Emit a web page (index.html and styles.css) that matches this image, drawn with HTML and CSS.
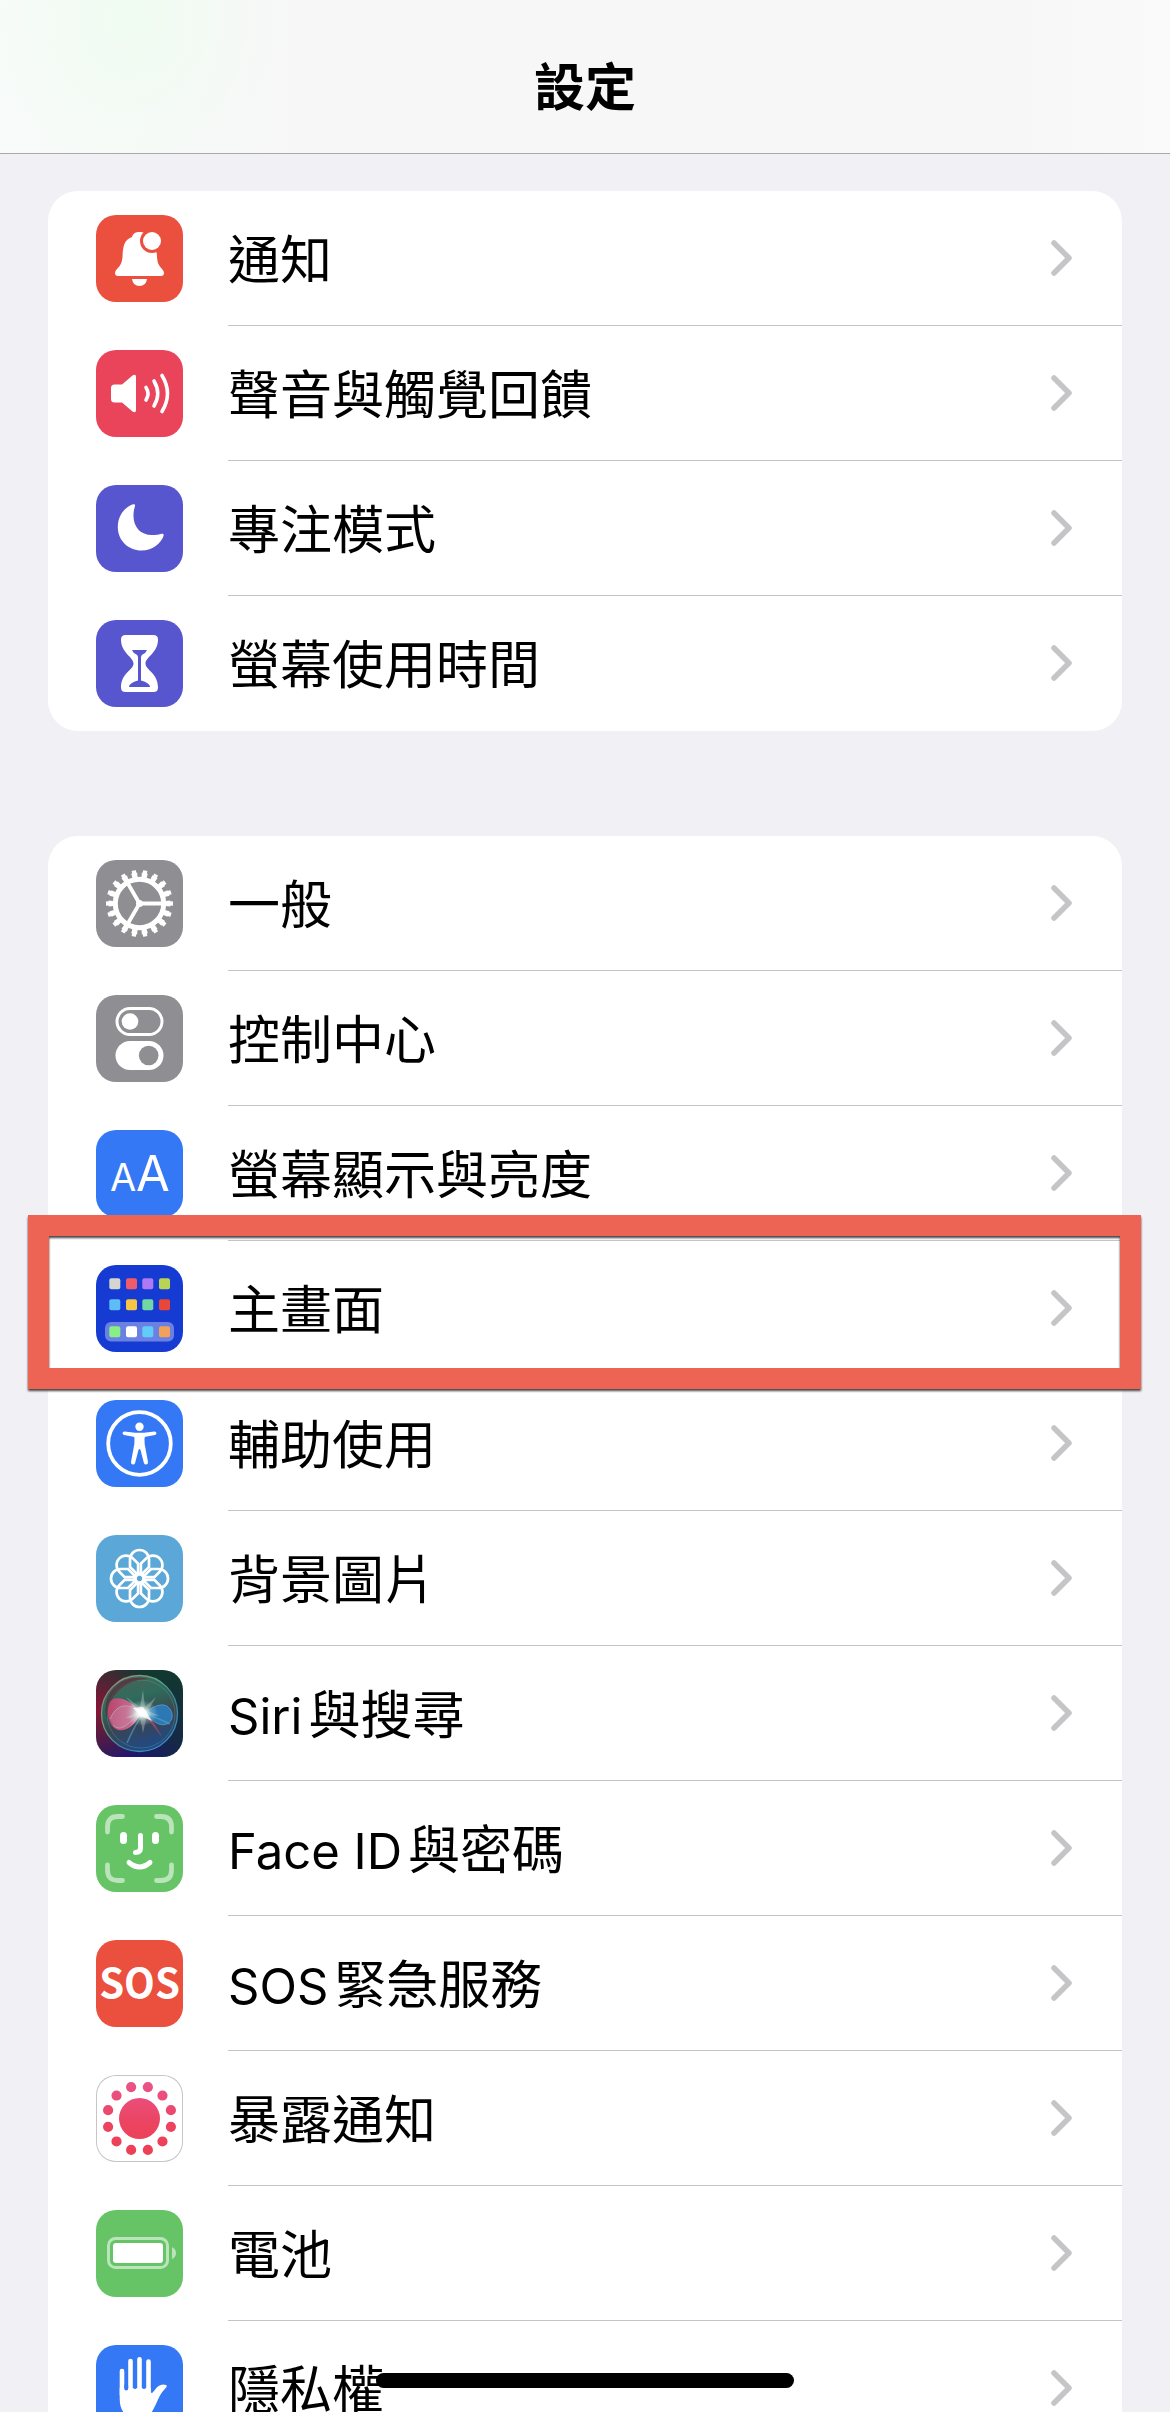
FILE: index.html
```html
<!DOCTYPE html>
<html lang="zh-Hant">
<head>
<meta charset="utf-8">
<meta name="viewport" content="width=device-width, initial-scale=1">
<title>設定</title>
<link rel="stylesheet" href="styles.css">
</head>
<body>
<svg class="defs" aria-hidden="true">
  <symbol id="chevron" viewBox="0 0 21 36"><path d="M3 3 18 18 3 33" fill="none" stroke="#c5c5c7" stroke-width="5.5" stroke-linecap="round" stroke-linejoin="round"/></symbol>
  <symbol id="petal" viewBox="0 0 87 87"><path d="M34 24.5a9.5 9.5 0 0 1 19 0V32L45.5 39.500h-4L34 32z" fill="none" stroke="#fff" stroke-width="2.700"/></symbol>
</svg>
<header class="nav"><h1 class="nav-title">設定</h1></header>
<main class="content">
  <ul class="group">
    <li class="row"><a class="link" href="#notifications">
      <svg class="icon red" viewBox="0 0 87 87"><path d="M22 61q-3 0-3-3 0-2 2-4c4-4 5-7 5.500-12C27 31 28 25 36 22c1-4 4-5 7.500-5s6.500 1 7.500 5c8 3 9.500 9 10 20 .5 6 1.500 8 5 12q2 2 2 4 0 3-3 3zM36 64h15q-1 7-7.500 7T36 64z" fill="#fff"/><circle cx="56" cy="26" r="12" fill="#eb4f3d"/><circle cx="56" cy="26" r="9" fill="#fff"/></svg>
      <span class="body"><span class="label">通知</span><svg class="chevron"><use href="#chevron"/></svg></span></a></li>
    <li class="row"><a class="link" href="#sounds">
      <svg class="icon pink" viewBox="0 0 87 87"><path d="M18.500 34.500H26L36.500 25.500Q40 23.500 40 27V60Q40 63.500 36.500 61.500L26 52.500H18.500Q15 52.500 15 49V38Q15 34.500 18.500 34.500z" fill="#fff"/><path d="M50 37.500q4 6 0 12.500M58 31q7.500 12.500 0 25M66 25.500q11 18 0 36" fill="none" stroke="#fff" stroke-width="3.600" stroke-linecap="round"/></svg>
      <span class="body"><span class="label">聲音與觸覺回饋</span><svg class="chevron"><use href="#chevron"/></svg></span></a></li>
    <li class="row"><a class="link" href="#focus">
      <svg class="icon indigo" viewBox="0 0 87 87"><path d="M37.500 19.200C33 20 21.800 27 21.800 42c0 14 11 23.500 23.500 23.500 12 0 20-8 22.200-14.500.6-2-.8-2.600-2.500-2-3 1-6 1.200-9 1C44.500 50 37.500 42 37.500 31c0-5 .6-6.500 1.400-9.500.5-1.700 0-2.500-1.400-2.300z" fill="#fff"/></svg>
      <span class="body"><span class="label">專注模式</span><svg class="chevron"><use href="#chevron"/></svg></span></a></li>
    <li class="row"><a class="link" href="#screentime">
      <svg class="icon indigo" viewBox="0 0 87 87"><path d="M29.500 15h28Q62 15 62 19.500C62 33 49.500 37 49.500 43.500S62 53 62 67.500Q62 72 57.500 72h-28Q25 72 25 67.500C25 53 37.500 50 37.500 43.500S25 33 25 19.500Q25 15 29.500 15z" fill="#fff"/><path d="M36 30H51Q50 33 46.500 34.500 45 35.500 45 37.500V60.500Q54 63 54 67H33Q33 63 42 60.500V37.500Q42 35.500 40.500 34.500 37 33 36 30z" fill="#5856ce"/></svg>
      <span class="body"><span class="label">螢幕使用時間</span><svg class="chevron"><use href="#chevron"/></svg></span></a></li>
  </ul>

  <ul class="group">
    <li class="row"><a class="link" href="#general">
      <svg class="icon gray" viewBox="0 0 87 87"><g fill="none" stroke="#fff"><circle cx="43.500" cy="43.500" r="24.200" stroke-width="5"/><circle cx="43.500" cy="43.500" r="28.500" stroke-width="5" pathLength="180" stroke-dasharray="5.600 4.400" stroke-dashoffset="2.800"/><circle cx="43.500" cy="43.500" r="31" stroke-width="5" pathLength="180" stroke-dasharray="3.800 6.200" stroke-dashoffset="1.900"/><path d="M43.500 43.500H66M43.500 43.500 32.200 24M43.500 43.500 32.200 63" stroke-width="3.800"/></g><circle cx="43.500" cy="43.500" r="3.500" fill="#fff"/></svg>
      <span class="body"><span class="label">一般</span><svg class="chevron"><use href="#chevron"/></svg></span></a></li>
    <li class="row"><a class="link" href="#control">
      <svg class="icon gray" viewBox="0 0 87 87"><rect x="21" y="13.500" width="45" height="26" rx="13" fill="none" stroke="#fff" stroke-width="3"/><circle cx="34" cy="26.500" r="8.300" fill="#fff"/><rect x="19.500" y="46" width="48" height="29" rx="14.500" fill="#fff"/><circle cx="52.700" cy="60.500" r="9.800" fill="#8e8e93"/></svg>
      <span class="body"><span class="label">控制中心</span><svg class="chevron"><use href="#chevron"/></svg></span></a></li>
    <li class="row"><a class="link" href="#display">
      <svg class="icon blue" viewBox="0 0 87 87"><g class="aa"><text x="27" y="61" font-size="38">A</text><text x="57" y="61" font-size="49">A</text></g></svg>
      <span class="body"><span class="label">螢幕顯示與亮度</span><svg class="chevron"><use href="#chevron"/></svg></span></a></li>
    <li class="row highlighted"><a class="link" href="#home">
      <svg class="icon navy" viewBox="0 0 87 87"><rect x="9" y="57" width="69" height="19.500" rx="6" fill="#fff" opacity=".36"/><g>
        <rect x="13.300" y="13.300" width="11" height="11" rx="2" fill="#d6d6d0"/><rect x="30" y="13.300" width="11" height="11" rx="2" fill="#ee5c6a"/><rect x="46.300" y="13.300" width="11" height="11" rx="2" fill="#ad79f5"/><rect x="63" y="13.300" width="11" height="11" rx="2" fill="#b9d353"/>
        <rect x="13.300" y="34.300" width="11" height="11" rx="2" fill="#5ebdf7"/><rect x="30" y="34.300" width="11" height="11" rx="2" fill="#f7c443"/><rect x="46.300" y="34.300" width="11" height="11" rx="2" fill="#70d7a5"/><rect x="63" y="34.300" width="11" height="11" rx="2" fill="#e84835"/>
        <rect x="13.300" y="61.300" width="11" height="11" rx="2" fill="#87ef83"/><rect x="30" y="61.300" width="11" height="11" rx="2" fill="#fff"/><rect x="46.300" y="61.300" width="11" height="11" rx="2" fill="#62cbf8"/><rect x="63" y="61.300" width="11" height="11" rx="2" fill="#f2a15a"/></g></svg>
      <span class="body"><span class="label">主畫面</span><svg class="chevron"><use href="#chevron"/></svg></span></a></li>
    <li class="row"><a class="link" href="#accessibility">
      <svg class="icon blue" viewBox="0 0 87 87"><circle cx="43.500" cy="43.500" r="31.300" fill="none" stroke="#fff" stroke-width="3.800"/><circle cx="43.500" cy="26.700" r="4.200" fill="#fff"/><path d="M28.500 31.500 39 32.800H48L58.500 31.500Q60.500 31.600 60.500 33.300 60.400 34.600 59 34.900L49.500 36.700Q48.500 37 48.500 38.500 48.300 44 49.500 48.500L52 62Q52.200 64 50.300 64.500 48.500 64.700 47.900 63L44.500 50Q43.500 48 42.500 50L39.100 63Q38.500 64.700 36.700 64.500 34.800 64 35 62L37.500 48.500Q38.700 44 38.500 38.500 38.500 37 37.500 36.700L28 34.900Q26.600 34.600 26.500 33.300 26.500 31.600 28.500 31.500z" fill="#fff"/></svg>
      <span class="body"><span class="label">輔助使用</span><svg class="chevron"><use href="#chevron"/></svg></span></a></li>
    <li class="row"><a class="link" href="#wallpaper">
      <svg class="icon sky" viewBox="0 0 87 87"><use href="#petal"/><use href="#petal" transform="rotate(45 43.500 43.500)"/><use href="#petal" transform="rotate(90 43.500 43.500)"/><use href="#petal" transform="rotate(135 43.500 43.500)"/><use href="#petal" transform="rotate(180 43.500 43.500)"/><use href="#petal" transform="rotate(225 43.500 43.500)"/><use href="#petal" transform="rotate(270 43.500 43.500)"/><use href="#petal" transform="rotate(315 43.500 43.500)"/><circle cx="43.500" cy="43.500" r="5" fill="none" stroke="#fff" stroke-width="2.400"/></svg>
      <span class="body"><span class="label">背景圖片</span><svg class="chevron"><use href="#chevron"/></svg></span></a></li>
    <li class="row"><a class="link" href="#siri">
      <svg class="icon siri" viewBox="0 0 87 87">
        <defs>
          <linearGradient id="orb" x1=".3" y1="0" x2=".6" y2="1"><stop offset="0" stop-color="#4b6358"/><stop offset=".3" stop-color="#2f6b5c"/><stop offset=".6" stop-color="#3b4450"/><stop offset="1" stop-color="#1d4b8c"/></linearGradient>
          <linearGradient id="rim" x1="0" y1="0" x2="1" y2="1"><stop offset="0" stop-color="#b07a75"/><stop offset=".35" stop-color="#5fa583"/><stop offset=".65" stop-color="#3c8c9c"/><stop offset="1" stop-color="#3d8fe0"/></linearGradient>
          <linearGradient id="lobe" x1="0" y1="0" x2="1" y2="0"><stop offset="0" stop-color="#b8456c"/><stop offset=".65" stop-color="#c9668d"/><stop offset="1" stop-color="#f6e4ea"/></linearGradient>
          <radialGradient id="glow"><stop offset="0" stop-color="#fff"/><stop offset=".25" stop-color="#fff" stop-opacity=".9"/><stop offset=".6" stop-color="#c8e8e0" stop-opacity=".35"/><stop offset="1" stop-color="#c8e8e0" stop-opacity="0"/></radialGradient>
        </defs>
        <circle cx="43.500" cy="43.500" r="38" fill="url(#orb)" stroke="url(#rim)" stroke-width="1.300"/>
        <circle cx="45" cy="44" r="34" fill="none" stroke="#4fae8e" stroke-opacity=".35"/>
        <path d="M17 19Q30 4 52 9 35 9 23 20T11 49Q6 32 17 19z" fill="#5d1f35" opacity=".6"/>
        <path d="M46 43C36 32 26 26 17 29 9 34 10 56 22 60c12 2 18-9 24-17z" fill="url(#lobe)"/>
        <path d="M14 49C22 31 34 34 46 43 36 48 26 65 17 55" fill="#c9a0b5" fill-opacity=".3" stroke="#a6d5d8" stroke-opacity=".5"/>
        <path d="M48 43C58 36 65 33 71 36c7 5 7 15 0 18-8 3-14-3-23-11z" fill="#2c78b5" stroke="#67b0d5" stroke-opacity=".6"/>
        <path d="M47 43Q39 55 31 73M47 43Q62 48 74 54" fill="none" stroke="#55a3c8" stroke-opacity=".6" stroke-width="1.500"/>
        <path d="M50 47 67 68 56 50z" fill="#b64b67" opacity=".7"/>
        <path d="M47 20 49 37 60 27 52 41 64 46 51 45 47 63 44 47 29 48 42 42 30 27 44 37z" fill="#dff7ee" opacity=".3"/>
        <ellipse cx="46" cy="43" rx="16" ry="13" fill="url(#glow)"/><path d="M37 38 47 37 56 51 45 46z" fill="#fff" opacity=".8"/>
      </svg>
      <span class="body"><span class="label"><span class="latin">Siri</span>與搜尋</span><svg class="chevron"><use href="#chevron"/></svg></span></a></li>
    <li class="row"><a class="link" href="#faceid">
      <svg class="icon green" viewBox="0 0 87 87"><g fill="none" stroke="#fff" stroke-linecap="round"><path d="M11.500 27V22Q11.500 11.500 22 11.500H26.500M60.500 11.500H65Q75.500 11.500 75.500 22V27M75.500 60V65Q75.500 75.500 65 75.500H60.500M26.500 75.500H22Q11.500 75.500 11.500 65V60" stroke-width="4.800" opacity=".55"/><path d="M27.500 30.500V35.500M59.500 30.500V35.500" stroke-width="7"/><path d="M44.500 30.500V43Q44.500 47.500 39.500 47.500M33 57.500Q43.500 66.500 54 57.500" stroke-width="5"/></g></svg>
      <span class="body"><span class="label"><span class="latin">Face ID</span>與密碼</span><svg class="chevron"><use href="#chevron"/></svg></span></a></li>
    <li class="row"><a class="link" href="#sos">
      <svg class="icon red" viewBox="0 0 87 87"><text class="sos" x="43.500" y="58">SOS</text></svg>
      <span class="body"><span class="label"><span class="latin">SOS</span>緊急服務</span><svg class="chevron"><use href="#chevron"/></svg></span></a></li>
    <li class="row"><a class="link" href="#exposure">
      <svg class="icon outlined" viewBox="0 0 87 87"><defs><linearGradient id="exposure-pink" gradientUnits="userSpaceOnUse" x1="43" y1="7" x2="43" y2="80"><stop offset="0" stop-color="#e9548a"/><stop offset=".6" stop-color="#ec435f"/><stop offset="1" stop-color="#ec4055"/></linearGradient></defs><circle cx="43.500" cy="43.500" r="20.500" fill="url(#exposure-pink)"/><circle cx="43.500" cy="43.500" r="32.500" fill="none" stroke="url(#exposure-pink)" stroke-width="10.200" stroke-linecap="round" pathLength="120" stroke-dasharray="0 10" stroke-dashoffset="-5"/></svg>
      <span class="body"><span class="label">暴露通知</span><svg class="chevron"><use href="#chevron"/></svg></span></a></li>
    <li class="row"><a class="link" href="#battery">
      <svg class="icon green" viewBox="0 0 87 87"><g opacity=".55"><rect x="12.500" y="28.500" width="59" height="29" rx="7" fill="none" stroke="#fff" stroke-width="3"/><path d="M76 37Q80 39 80 43T76 49z" fill="#fff"/></g><rect x="17" y="33" width="50" height="20" rx="3" fill="#fff"/></svg>
      <span class="body"><span class="label">電池</span><svg class="chevron"><use href="#chevron"/></svg></span></a></li>
    <li class="row"><a class="link" href="#privacy">
      <svg class="icon blue" viewBox="0 0 87 87"><path d="M26 26V50M34.500 16V48M43.500 14.300V48M52.500 16.500V48" stroke="#fff" stroke-width="4.600" stroke-linecap="round"/><path d="M23.700 43H54.800V46Q55 50 58 46C62 40 66 38.500 70 40 72 41 70 43 68 45 63 50 61 58 57 65 53 72 49 74 43 74 30 74 23.700 66 23.700 54z" fill="#fff"/><path d="M30.200 41V43.500M39 41V42M48 41V42" stroke="#3478f6" stroke-width="4" stroke-linecap="round"/></svg>
      <span class="body"><span class="label">隱私權</span><svg class="chevron"><use href="#chevron"/></svg></span></a></li>
  </ul>
</main>
<div class="home-indicator"></div>
</body>
</html>
```
FILE: styles.css
```css
* { box-sizing: border-box; }

body {
  margin: 0;
  height: 100vh;
  display: flex;
  flex-direction: column;
  overflow: hidden;
  background: #f1f0f5;
  color: #000;
  font-family: Inter, "Noto Sans CJK TC", sans-serif;
  font-size: 52px;
  line-height: 60px;
}

.defs { position: absolute; width: 0; height: 0; }

.nav {
  flex: none;
  padding: 58px 48px 35px;
  border-bottom: 1px solid #a9a9ab;
  background:
    radial-gradient(ellipse 150px 170px at 130px 20px, #f0fcf1, #f0fcf100),
    linear-gradient(90deg, #f8fbfa, #f7f7f7 30%, #f7f7f7 85%, #fafafa);
}

.nav-title {
  margin: 0;
  font-size: 51px;
  font-weight: 700;
  text-align: center;
}

.content {
  flex: 1;
  min-height: 0;
  padding: 37px 48px 0;
  overflow-y: auto;
  scrollbar-width: none;
}

.group {
  margin: 0 0 105px;
  padding: 0;
  list-style: none;
  border-radius: 30px;
  background: #fff;
}

.row { position: relative; }

.link {
  display: flex;
  align-items: center;
  gap: 45px;
  padding-left: 48px;
  color: inherit;
  text-decoration: none;
}

.icon {
  flex: none;
  width: 87px;
  height: 87px;
  border-radius: 20px;
}

.body {
  flex: 1;
  display: flex;
  align-items: center;
  justify-content: space-between;
  height: 135px;
  padding-right: 50px;
  border-bottom: 1px solid #c4c4c6;
}

.row:last-child .body { border-bottom-color: transparent; }

.label { padding-top: 6px; }

.latin { margin-right: 6px; font-size: 49px; }

.chevron { flex: none; width: 21px; height: 36px; }

.red { background: #eb4f3d; }
.pink { background: #ea445a; }
.indigo { background: #5856ce; }
.gray { background: #8e8e93; }
.blue { background: #3478f6; }
.navy { background: #163bd3; }
.sky { background: #5aa7d8; }
.green { background: #66c466; }
.outlined { background: #fff; box-shadow: inset 0 0 0 1px #c6c6c8; }
.siri {
  background:
    radial-gradient(circle at 0 45%, #8a1436, #8a143600 60%),
    radial-gradient(circle at 35% 100%, #1c1673, #1c167300 50%),
    linear-gradient(180deg, #12382f, #16264a);
}

.aa {
  fill: #fff;
  font-family: Inter, sans-serif;
  font-weight: 400;
  text-anchor: middle;
}

.sos {
  fill: #fff;
  font-family: "Noto Sans CJK TC", sans-serif;
  font-size: 40px;
  font-weight: 700;
  text-anchor: middle;
}

/* Callout frame around the selected row */
.highlighted::after {
  content: "";
  position: absolute;
  z-index: 1;
  inset: -26px -19px -13px -20px;
  border: 21px solid #ed6454;
  filter: drop-shadow(0 2px 1px #444);
  pointer-events: none;
}

.home-indicator {
  position: fixed;
  z-index: 2;
  bottom: 24px;
  left: 50%;
  width: 418px;
  height: 15px;
  border-radius: 8px;
  background: #000;
  transform: translateX(-50%);
}
```
